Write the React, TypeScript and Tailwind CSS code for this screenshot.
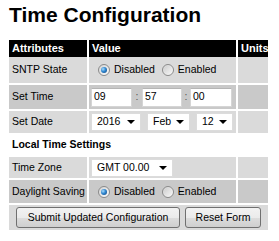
import React from "react";

const sans = "font-['Liberation_Sans',sans-serif]";

function Radio({ checked }: { checked?: boolean }) {
  return (
    <span className="inline-flex w-[12px] h-[12px] rounded-full border border-[#8a8a8a] bg-[linear-gradient(135deg,#d4d4d4,#fbfbfb)] items-center justify-center ml-[7px] mr-[4px] shrink-0">
      {checked ? (
        <span className="w-[6px] h-[6px] rounded-full bg-[radial-gradient(circle_at_35%_35%,#a9dcfb_0%,#2f86cf_45%,#0f3f78_100%)]" />
      ) : (
        <span className="w-[8px] h-[8px] rounded-full bg-[linear-gradient(135deg,#cfcfcf,#f4f4f4)]" />
      )}
    </span>
  );
}

function RadioPair() {
  return (
    <div className="flex items-center">
      <Radio checked />
      <span>Disabled</span>
      <Radio />
      <span>Enabled</span>
    </div>
  );
}

function TimeInput({ value, w }: { value: string; w: string }) {
  return (
    <div
      className={`${w} h-[19px] bg-white border border-[#d5d5d5] border-t-[#b5b5b5] pl-[2px] flex items-center`}
    >
      {value}
    </div>
  );
}

function Select({ value, w }: { value: string; w: string }) {
  return (
    <div
      className={`${w} h-[18px] bg-white border border-[#dcdcdc] flex items-center justify-between pl-[5px] pr-[5px]`}
    >
      <span>{value}</span>
      <span className="w-0 h-0 border-x-[4px] border-x-transparent border-t-[4px] border-t-black" />
    </div>
  );
}

// one table row: attribute | value | units
function Row({
  label,
  h,
  bg,
  children,
}: {
  label: string;
  h: string;
  bg: string;
  children?: React.ReactNode;
}) {
  return (
    <div className={`grid grid-cols-[78px_147px_30px] gap-x-[2px] ${h}`}>
      <div className={`${bg} pl-[3px] flex items-center`}>{label}</div>
      <div className={`${bg} pl-[2px] flex items-center`}>{children}</div>
      <div className={bg} />
    </div>
  );
}

const light = "bg-[#dadada]";
const dark = "bg-[#c9c9c9]";
const btn =
  "h-[21px] rounded-[3px] border border-[#707070] bg-[linear-gradient(#f2f2f2_0%,#ebebeb_50%,#dddddd_51%,#cfcfcf_100%)] text-black font-['Liberation_Sans',sans-serif] text-[10.5px]";

export default function App() {
  return (
    <div className="w-[279px] h-[241px] overflow-hidden bg-white pl-[9px] text-black">
      <h1 className={`${sans} pt-[3px] text-[21px] leading-[24px] font-bold`}>
        Time Configuration
      </h1>
      <div className={`${sans} mt-[13px] w-[259px] flex flex-col gap-y-[2px] text-[10.5px]`}>
        <div className="grid grid-cols-[78px_147px_30px] gap-x-[2px] h-[15px] text-white text-[11px] font-bold">
          <div className="bg-black pl-[3px] flex items-center">Attributes</div>
          <div className="bg-black pl-[3px] flex items-center">Value</div>
          <div className="bg-black pl-[3px] flex items-center overflow-hidden">Units</div>
        </div>
        <Row label="SNTP State" h="h-[26px]" bg={light}>
          <RadioPair />
        </Row>
        <Row label="Set Time" h="h-[24px]" bg={dark}>
          <TimeInput value="09" w="w-[41px]" />
          <span className="w-[10px] text-center text-[#555]">:</span>
          <TimeInput value="57" w="w-[40px]" />
          <span className="w-[8px] text-center text-[#555]">:</span>
          <TimeInput value="00" w="w-[42px]" />
        </Row>
        <Row label="Set Date" h="h-[22px]" bg={light}>
          <div className="flex items-center gap-[6px]">
            <Select value="2016" w="w-[50px]" />
            <Select value="Feb" w="w-[43px]" />
            <Select value="12" w="w-[37px]" />
          </div>
        </Row>
        <div className="h-[20px] pl-[3px] flex items-center font-bold text-[10.5px]">
          Local Time Settings
        </div>
        <Row label="Time Zone" h="h-[21px]" bg={light}>
          <Select value="GMT 00.00" w="w-[82px]" />
        </Row>
        <Row label="Daylight Saving" h="h-[23px]" bg={dark}>
          <RadioPair />
        </Row>
        <div className={`${light} h-[25px] flex items-center justify-center gap-[5px]`}>
          <button type="button" className={`${btn} w-[164px]`}>
            Submit Updated Configuration
          </button>
          <button type="button" className={`${btn} w-[76px]`}>
            Reset Form
          </button>
        </div>
      </div>
    </div>
  );
}
